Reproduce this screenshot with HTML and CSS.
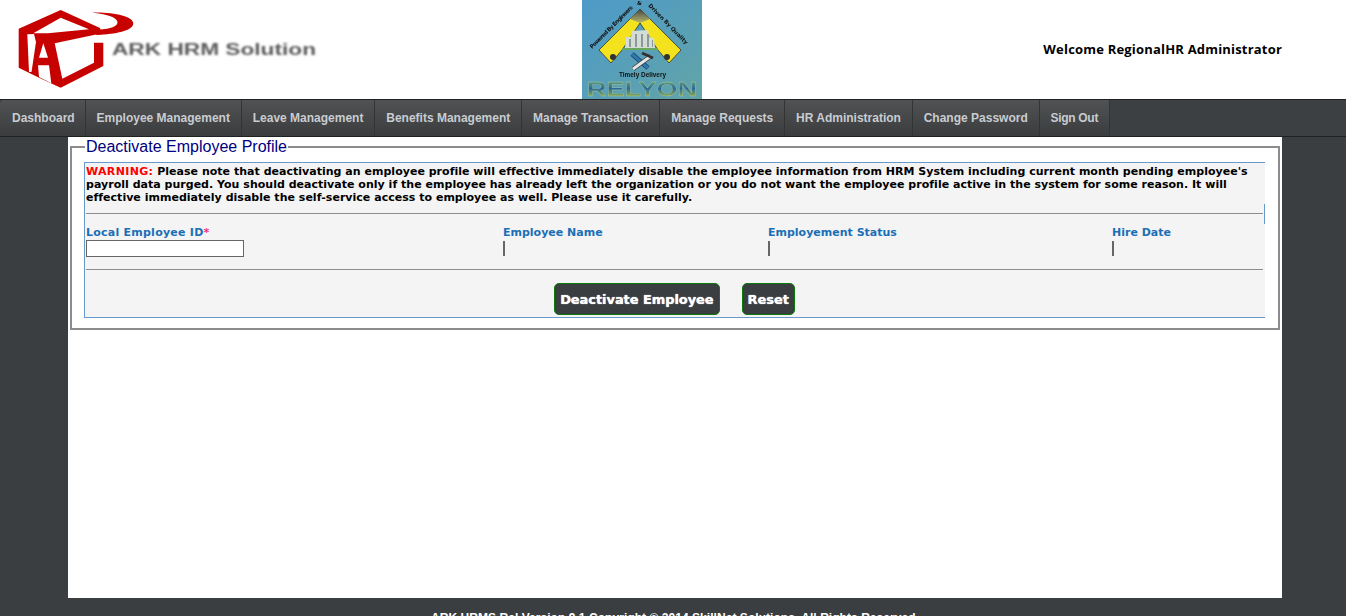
FILE: index.html
```html
<!DOCTYPE html>
<html>
<head>
    <title>ARK HRM Solution</title>
    <link rel="stylesheet" href="styles.css">
</head>
<body>
    <div class="header">
        <div class="logo-left">
            <svg width="330" height="99" viewBox="0 0 330 99">
                <defs>
                    <filter id="soft" x="-5%" y="-30%" width="110%" height="160%">
                        <feGaussianBlur stdDeviation="0.9"/>
                    </filter>
                    <filter id="softer">
                        <feGaussianBlur stdDeviation="0.35"/>
                    </filter>
                </defs>
                <g filter="url(#softer)">
                    <path fill="#c70000" d="M18.7 28.7 L60.7 10 L100 28 L103.3 42 L103.3 66 L60.7 87.7 L39 77.7 L18.7 67.7 Z"/>
                    <path fill="#fff" d="M33.3 33.3 L60.7 17.7 L89 29.3 L48 33.3 Z"/>
                    <path fill="#fff" d="M54.7 43.3 L97.3 34.3 L105 34.3 L105 42.7 L94 42.7 L94 62.7 L62.3 78.7 Z"/>
                    <path fill="#fff" d="M27.3 34.3 L34 34 L36 42 L31.5 72 L29 72 Z"/>
                    <path fill="#fff" d="M43.3 43.3 L48 57.7 L39 57.7 Z"/>
                    <path fill="#fff" d="M38 65.3 L49 65.3 L51.3 83.3 L39 77 Z"/>
                    <path fill="#c70000" d="M92.3 12.7 C112 12 134 16 133.3 24 C132 31 116 34 97 35 L90 30 C104 30 118 28 117.5 22 C117 17 106 14 92.3 12.7 Z"/>
                </g>
                <text class="logo-text" x="112" y="55" textLength="204" lengthAdjust="spacingAndGlyphs" filter="url(#soft)">ARK HRM Solution</text>
            </svg>
        </div>
        <div class="logo-mid">
            <svg width="120" height="99" viewBox="0 0 120 99">
                <defs>
                    <linearGradient id="sky" x1="0" y1="0" x2="1" y2="1">
                        <stop offset="0" stop-color="#4d9ac9"/>
                        <stop offset="1" stop-color="#62a4a8"/>
                    </linearGradient>
                    <linearGradient id="rel" x1="0" y1="0" x2="0" y2="1">
                        <stop offset="0.1" stop-color="#6fb070"/>
                        <stop offset="0.5" stop-color="#2c6a9a"/>
                        <stop offset="0.9" stop-color="#9ab840"/>
                    </linearGradient>
                    <linearGradient id="apex" x1="0" y1="0" x2="0" y2="1">
                        <stop offset="0" stop-color="#444"/>
                        <stop offset="1" stop-color="#b8b86a"/>
                    </linearGradient>
                    <path id="arcl" d="M10 49 L53 6"/>
                    <path id="arcm" d="M55 5 L63 5"/>
                    <path id="arcr" d="M66 6 L105 46"/>
                    <filter id="blurry">
                        <feGaussianBlur stdDeviation="0.3"/>
                    </filter>
                </defs>
                <rect width="120" height="99" fill="url(#sky)"/>
                <g filter="url(#blurry)">
                    <path fill="#f3e21f" stroke="#222" stroke-width="0.7" d="M58 9 L99 50 L87 63 L76 50 L58 23 L40 50 L29 63 L17 50 Z"/>
                    <path fill="url(#apex)" d="M58 9 L68 19 L58 23 L48 19 Z"/>
                    <path fill="#d4dcd6" d="M43 48 L44 37 L49 37 L50 31 L66 30 L67 37 L72 38 L73 48 Z"/>
                    <path fill="#8a9a9a" d="M47 39 H49 V47 H47 Z M53 34 H55 V47 H53 Z M59 34 H61 V47 H59 Z M65 34 H67 V47 H65 Z M70 40 H71 V47 H70 Z"/>
                    <rect x="40" y="48" width="36" height="2" fill="#6aa860"/>
                    <ellipse cx="31" cy="57" rx="3" ry="3" fill="#333"/>
                    <ellipse cx="85" cy="57" rx="3" ry="3" fill="#333"/>
                    <path stroke="#1c3c5c" stroke-width="4.5" d="M50 54 L66 68"/>
                    <path stroke="#2f78b0" stroke-width="3" d="M50 54 L66 68"/>
                    <path stroke="#333" stroke-width="4.5" d="M69 56 L51 69"/>
                    <path stroke="#e6e6e6" stroke-width="3" d="M69 56 L51 69"/>
                    <path stroke="#333" stroke-width="3" d="M60 53 L71 58"/>
                    <text class="rel-arc"><textPath href="#arcl" textLength="58">Powered By Engineers</textPath></text>
                    <text class="rel-arc"><textPath href="#arcm">&amp;</textPath></text>
                    <text class="rel-arc"><textPath href="#arcr" textLength="54">Driven By Quality</textPath></text>
                    <text class="rel-small" x="37" y="77" textLength="47" lengthAdjust="spacingAndGlyphs">Timely Delivery</text>
                    <text class="rel-name" x="5" y="96" textLength="110" lengthAdjust="spacingAndGlyphs" fill="url(#rel)" stroke="#a8c4a0" stroke-width="0.3">RELYON</text>
                </g>
            </svg>
        </div>
        <div class="welcome">Welcome RegionalHR Administrator</div>
    </div>

    <ul class="nav">
        <li><a href="#">Dashboard</a></li>
        <li><a href="#">Employee Management</a></li>
        <li><a href="#">Leave Management</a></li>
        <li><a href="#">Benefits Management</a></li>
        <li><a href="#">Manage Transaction</a></li>
        <li><a href="#">Manage Requests</a></li>
        <li><a href="#">HR Administration</a></li>
        <li><a href="#">Change Password</a></li>
        <li><a href="#">Sign Out</a></li>
    </ul>

    <div class="content">
        <fieldset class="panel">
            <legend>Deactivate Employee Profile</legend>
            <div class="box">
                <span class="box-tick"></span>
                <p class="warning"><span class="warn-label">WARNING:</span> Please note that deactivating an employee profile will effective immediately disable the employee information from HRM System including current month pending employee's payroll data purged. You should deactivate only if the employee has already left the organization or you do not want the employee profile active in the system for some reason. It will effective immediately disable the self-service access to employee as well. Please use it carefully.</p>
                <hr class="rule rule-top">
                <div class="fields">
                    <div class="field">
                        <label for="empId" class="label-wide">Local Employee ID<span class="req">*</span></label>
                        <input type="text" id="empId">
                    </div>
                    <div class="field">
                        <label>Employee Name</label>
                        <span class="empty-value"></span>
                    </div>
                    <div class="field">
                        <label>Employement Status</label>
                        <span class="empty-value"></span>
                    </div>
                    <div class="field">
                        <label>Hire Date</label>
                        <span class="empty-value"></span>
                    </div>
                </div>
                <hr class="rule rule-bottom">
                <div class="actions">
                    <button type="button" class="btn">Deactivate Employee</button>
                    <button type="button" class="btn">Reset</button>
                </div>
            </div>
        </fieldset>
    </div>

    <div class="footer">ARK HRMS Rel Version 9.1 Copyright &copy; 2014 SkillNet Solutions. All Rights Reserved.</div>
</body>
</html>
```

FILE: styles.css
```css
html, body {
    height: 616px;
    overflow: hidden;
}

body {
    margin: 0;
    background-color: #3b3e40;
    font-family: "Liberation Sans", Arial, sans-serif;
}

.header {
    display: flex;
    height: 99px;
    background-color: #fff;
}

.logo-left {
    width: 582px;
}

.logo-left svg, .logo-mid svg {
    display: block;
}

.logo-text {
    font-family: "Liberation Sans", Arial, sans-serif;
    font-weight: bold;
    font-size: 16px;
    fill: #5a5a5a;
}

.rel-arc {
    font-family: "DejaVu Sans", Verdana, sans-serif;
    font-weight: bold;
    font-size: 5.5px;
    fill: #111;
}

.rel-small {
    font-family: "Liberation Sans", Arial, sans-serif;
    font-weight: bold;
    font-size: 8px;
    fill: #111;
}

.rel-name {
    font-family: "Liberation Sans", Arial, sans-serif;
    font-weight: bold;
    font-size: 21px;
}

.logo-mid {
    width: 120px;
}

.welcome {
    flex: 1;
    padding-top: 40px;
    padding-right: 64px;
    text-align: right;
    font-family: "Open Sans", Arial, sans-serif;
    font-weight: bold;
    font-size: 13px;
    line-height: 18px;
    letter-spacing: 0.19px;
    color: #000;
}

.nav {
    display: flex;
    height: 36px;
    margin: 0;
    padding: 0;
    list-style: none;
    border-top: 1px solid #1f2122;
    border-bottom: 1px solid #1f2122;
    background-color: #3d4042;
}

.nav li a {
    display: block;
    height: 36px;
    padding: 0 10.9px;
    line-height: 36px;
    font-size: 12px;
    font-weight: bold;
    color: #c9ccd0;
    text-decoration: none;
    white-space: nowrap;
    border-right: 1px solid #323536;
    background: linear-gradient(#505254, #3a3c3e);
}

.nav li:first-child a {
    padding: 0 10px 0 12px;
    border-radius: 4px 0 0 4px;
}

.nav li:last-child a {
    letter-spacing: -0.3px;
}

.content {
    height: 460px;
    margin: 0 64px 0 68px;
    padding: 1px 2px 0;
    background-color: #fff;
}

.panel {
    margin: 0;
    padding: 6px 13px 10px 12px;
    border: 2px solid #8c8c8c;
    min-width: 0;
}

.panel legend {
    margin-left: 1px;
    padding: 0 1px;
    font-size: 16px;
    line-height: 18px;
    color: #000080;
}

.box {
    position: relative;
    padding: 2px 2px 0 1px;
    height: 152px;
    background-color: #f4f4f4;
    border: 1px solid #6699cc;
    border-right: 0;
    font-family: "DejaVu Sans", Verdana, sans-serif;
}

.box-tick {
    position: absolute;
    right: 0;
    top: 41px;
    width: 1px;
    height: 20px;
    background-color: #6699cc;
}

.warning {
    margin: 0;
    font-size: 11px;
    font-weight: bold;
    line-height: 13px;
    letter-spacing: 0.02px;
    color: #000;
}

.warn-label {
    letter-spacing: 0.35px;
    color: #f00;
}

.rule {
    height: 1px;
    margin: 0;
    border: 0;
    background-color: #8c8c8c;
}

.rule-top {
    margin-top: 9px;
}

.fields {
    display: grid;
    grid-template-columns: 417px 265px 344px 1fr;
    height: 55px;
    padding-top: 12px;
    box-sizing: border-box;
}

.field label {
    display: block;
    font-size: 11px;
    font-weight: bold;
    line-height: 14px;
    color: #1b6fb5;
}

.field .label-wide {
    letter-spacing: 0.24px;
}

.req {
    color: #f0317a;
}

.field input {
    display: block;
    box-sizing: border-box;
    width: 158px;
    height: 17px;
    margin: 0;
    padding: 0;
    background-color: #fff;
    border: 1px solid #666;
}

.empty-value {
    display: block;
    width: 2px;
    height: 15px;
    margin-top: 1px;
    background-color: #666;
}

.actions {
    display: flex;
    justify-content: center;
    gap: 22px;
    padding-top: 13px;
}

.btn {
    height: 32px;
    padding: 0 5px;
    background-color: #3b3e40;
    border: 1px solid #0a7a0a;
    border-radius: 5px;
    font-family: "DejaVu Sans", Verdana, sans-serif;
    font-size: 13px;
    font-weight: bold;
    letter-spacing: -0.07px;
    color: #fff;
    text-shadow: 0 0 1px #fff;
}

.footer {
    padding-top: 13px;
    padding-left: 4px;
    text-align: center;
    font-size: 12px;
    font-weight: bold;
    line-height: 14px;
    letter-spacing: 0.05px;
    color: #fff;
}
```
